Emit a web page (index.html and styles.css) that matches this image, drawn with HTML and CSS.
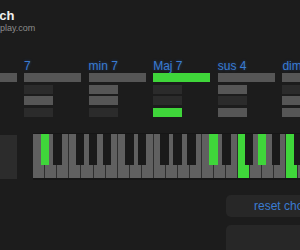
FILE: index.html
```html
<!DOCTYPE html>
<html>
<head>
<meta charset="utf-8">
<link rel="stylesheet" href="styles.css">
</head>
<body>
<header class="header">
  <h1 class="title">Chord Sketch</h1>
  <p class="subtitle">chordplay.com</p>
</header>

<section class="chords">
  <div class="chord">
    <div class="label">min</div>
    <div class="bar wide on"></div>
    <div class="bar off"></div>
    <div class="bar on"></div>
    <div class="bar off"></div>
  </div>
  <div class="chord">
    <div class="label">7</div>
    <div class="bar wide on"></div>
    <div class="bar off"></div>
    <div class="bar on"></div>
    <div class="bar off"></div>
  </div>
  <div class="chord">
    <div class="label">min 7</div>
    <div class="bar wide on"></div>
    <div class="bar on"></div>
    <div class="bar on"></div>
    <div class="bar off"></div>
  </div>
  <div class="chord">
    <div class="label">Maj 7</div>
    <div class="bar wide active"></div>
    <div class="bar off"></div>
    <div class="bar off"></div>
    <div class="bar active"></div>
  </div>
  <div class="chord">
    <div class="label">sus 4</div>
    <div class="bar wide on"></div>
    <div class="bar on"></div>
    <div class="bar off"></div>
    <div class="bar on"></div>
  </div>
  <div class="chord">
    <div class="label">dim</div>
    <div class="bar wide on"></div>
    <div class="bar off"></div>
    <div class="bar on"></div>
    <div class="bar on"></div>
  </div>
</section>

<section class="keyboard-row">
  <div class="side-panel"></div>
  <div class="keys">
    <div class="oct">
      <div class="w"></div><div class="w"></div><div class="w"></div><div class="w"></div><div class="w"></div><div class="w"></div><div class="w"></div>
      <div class="b cs lit"></div><div class="b ds"></div><div class="b fs"></div><div class="b gs"></div><div class="b as"></div>
    </div>
    <div class="oct">
      <div class="w"></div><div class="w"></div><div class="w"></div><div class="w"></div><div class="w"></div><div class="w"></div><div class="w"></div>
      <div class="b cs"></div><div class="b ds"></div><div class="b fs"></div><div class="b gs"></div><div class="b as"></div>
    </div>
    <div class="oct">
      <div class="w"></div><div class="w"></div><div class="w"></div><div class="w lit"></div><div class="w"></div><div class="w"></div><div class="w"></div>
      <div class="b cs lit"></div><div class="b ds"></div><div class="b fs"></div><div class="b gs lit"></div><div class="b as"></div>
    </div>
    <div class="oct">
      <div class="w lit"></div><div class="w"></div><div class="w"></div><div class="w"></div><div class="w"></div><div class="w"></div><div class="w"></div>
      <div class="b cs"></div><div class="b ds"></div><div class="b fs"></div><div class="b gs"></div><div class="b as"></div>
    </div>
  </div>
</section>

<section class="controls">
  <button class="btn">reset chord</button>
  <div class="panel"></div>
</section>
</body>
</html>
```

FILE: styles.css
```css
html, body {
  margin: 0;
  padding: 0;
}

body {
  width: 300px;
  height: 250px;
  overflow: hidden;
  background: #1c1c1c;
  font-family: "Liberation Sans", Arial, sans-serif;
}

.header {
  padding-top: 8px;
}

.title {
  margin: 0 0 0 -70px;
  font-size: 13px;
  line-height: 15px;
  font-weight: bold;
  color: #f0f0f0;
  white-space: nowrap;
}

.subtitle {
  margin: 0 0 0 -22.5px;
  font-size: 9px;
  line-height: 11px;
  color: #8c8c8c;
  white-space: nowrap;
}

.chords {
  display: flex;
  gap: 7.3px;
  margin: 25px 0 0 -40.6px;
  width: 420px;
}

.chord {
  flex: none;
  width: 57.3px;
  display: flex;
  flex-direction: column;
  gap: 2.4px;
}

.label {
  height: 14px;
  line-height: 14px;
  font-size: 12px;
  color: #3a7cd2;
  text-shadow: 0 0 3px rgba(40, 100, 200, 0.45);
  margin-bottom: -2.4px;
  white-space: nowrap;
}

.bar {
  width: 29.2px;
  height: 9.2px;
  background: #2b2b2b;
}

.bar.wide {
  width: 100%;
}

.bar.on {
  background: #565656;
}

.bar.off {
  background: #2b2b2b;
}

.bar.active {
  background: #3fd63a;
}

.keyboard-row {
  display: flex;
  align-items: center;
  gap: 16.6px;
  margin: 16.5px 0 0 -40.6px;
  width: 420px;
}

.side-panel {
  flex: none;
  width: 57.3px;
  height: 44px;
  background: #2c2c2c;
}

.keys {
  display: flex;
  border-top: 1px solid #151515;
  border-bottom: 2px solid #151515;
}

.oct {
  position: relative;
  display: flex;
  flex: none;
}

.w {
  flex: none;
  width: 12.05px;
  height: 44px;
  box-sizing: border-box;
  background: #606060;
  border-right: 1px solid #2e2e2e;
}

.w.lit {
  background: #3fd63a;
}

.b {
  position: absolute;
  top: 0;
  width: 8.6px;
  height: 31px;
  background: #1a1a1a;
}

.b.lit {
  background: #3fd63a;
}

.cs { left: 7.5px; }
.ds { left: 20.2px; }
.fs { left: 42.6px; }
.gs { left: 55.6px; }
.as { left: 69.6px; }

.controls {
  display: flex;
  flex-direction: column;
  gap: 8px;
  margin: 15px 0 0 226px;
}

.btn {
  width: 116px;
  height: 22px;
  padding: 0;
  border: none;
  border-radius: 5px;
  background: #272727;
  color: #3a7cd2;
  font-family: "Liberation Sans", Arial, sans-serif;
  font-size: 12px;
  text-align: center;
}

.panel {
  width: 116px;
  height: 40px;
  border-radius: 5px;
  background: #272727;
}
```
